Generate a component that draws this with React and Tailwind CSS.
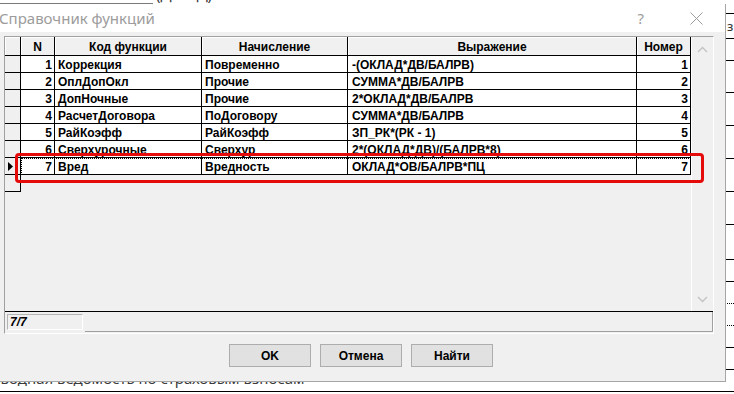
import React from 'react';

const rows = [
  [1, 'Коррекция', 'Повременно', '-(ОКЛАД*ДВ/БАЛРВ)', 1],
  [2, 'ОплДопОкл', 'Прочие', 'СУММА*ДВ/БАЛРВ', 2],
  [3, 'ДопНочные', 'Прочие', '2*ОКЛАД*ДВ/БАЛРВ', 3],
  [4, 'РасчетДоговора', 'ПоДоговору', 'СУММА*ДВ/БАЛРВ', 4],
  [5, 'РайКоэфф', 'РайКоэфф', 'ЗП_РК*(РК - 1)', 5],
  [6, 'Сверхурочные', 'Сверхур', '2*(ОКЛАД*ДВ)/(БАЛРВ*8)', 6],
  [7, 'Вред', 'Вредность', 'ОКЛАД*ОВ/БАЛРВ*ПЦ', 7],
];

// высоты строк листа за диалогом
const sheetRows = [
  { h: 'h-[10px]' },
  { h: 'h-[25px]', mark: true },
  { h: 'h-[22px]' },
  { h: 'h-[32px]' },
  { h: 'h-[33px]' },
  { h: 'h-[33px]' },
  { h: 'h-[33px]' },
  { h: 'h-[33px]' },
  { h: 'h-[35px]' },
  { h: 'h-[22px]' },
  { h: 'h-[22px]', dotted: true },
  { h: 'h-[22px]', dotted: true },
  { h: 'h-[22px]' },
  { h: 'h-[22px]' },
  { h: 'h-[22px]', last: true },
];

const cell = 'border-r border-b border-black h-full flex items-center pt-[1px] overflow-hidden whitespace-nowrap';

const HeaderCell = ({ w, children }) => (
  <div className={`${w} ${cell} justify-center bg-[#f0f0f0] shadow-[inset_1px_1px_0_#ffffff]`}>{children}</div>
);

const Chevron = ({ down }) => (
  <svg width="11" height="7" viewBox="0 0 11 7">
    <polyline
      points={down ? '1,1 5.5,5.5 10,1' : '1,6 5.5,1.5 10,6'}
      fill="none"
      stroke="#c2c2c2"
      strokeWidth="1.3"
    />
  </svg>
);

const Button = ({ children }) => (
  <button className="w-[82px] h-[23px] bg-[#e1e1e1] border border-[#adadad] text-[12px] font-bold text-black flex items-center justify-center">
    {children}
  </button>
);

export default function App() {
  return (
    <div className="relative w-[734px] h-[394px] overflow-hidden bg-white font-['Liberation_Sans',Arial,sans-serif]">
      {/* лист под диалогом */}
      <div className="h-[4px] flex overflow-hidden">
        <div className="w-[153px] h-[4px] border-b border-[#7a7a7a]" />
        <span className="ml-[3px] -mt-[13px] text-[15px] leading-none text-[#333] font-['Noto_Sans',sans-serif]">(ДФ БД)</span>
      </div>
      {sheetRows.map((r, i) => (
        <div
          key={i}
          className={`${r.h} w-full border-b border-black ${r.dotted ? 'border-dotted' : ''} flex ${r.last ? 'items-end' : 'items-center'}`}
        >
          {r.mark && <span className="ml-[727px] text-[13px] leading-none text-[#333] font-['Noto_Sans',sans-serif]">з</span>}
          {r.last && (
            <span className="-ml-[9px] pb-[5px] text-[15px] leading-none text-[#3a3a3a] font-['Noto_Sans',sans-serif] whitespace-nowrap">
              Сводная ведомость по страховым взносам
            </span>
          )}
        </div>
      ))}

      {/* окно диалога */}
      <div className="absolute left-0 top-[4px] w-[726px] h-[378px] flex flex-col bg-[#f0f0f0] border-r border-b border-[#a6a6a6]">
        <div className="h-[28px] bg-white flex items-center shrink-0">
          <span className="-ml-[1px] text-[15px] text-[#9c9c9c] font-['Noto_Sans',sans-serif] whitespace-nowrap">Справочник функций</span>
          <span className="ml-auto text-[15px] text-[#9c9c9c] font-['Noto_Sans',sans-serif]">?</span>
          <svg className="ml-[46px] mr-[22px]" width="13" height="13" viewBox="0 0 13 13">
            <path d="M0.5 0.5 L12.5 12.5 M12.5 0.5 L0.5 12.5" stroke="#9c9c9c" strokeWidth="1" />
          </svg>
        </div>

        <div className="flex-1 flex flex-col pt-[4px]">
          <div className="ml-[4px] w-[710px] h-[298px] border border-[#a0a0a0] border-r-white border-b-white flex flex-col">
            <div className="h-[274px] flex">
              <div className="w-[686px] flex flex-col text-[12px] font-bold text-black">
                <div className="h-[19px] flex">
                  <HeaderCell w="w-[16px]" />
                  <HeaderCell w="w-[34px]">N</HeaderCell>
                  <HeaderCell w="w-[147px]">Код функции</HeaderCell>
                  <HeaderCell w="w-[146px]">Начисление</HeaderCell>
                  <HeaderCell w="w-[289px]">Выражение</HeaderCell>
                  <HeaderCell w="w-[54px]">Номер</HeaderCell>
                </div>
                {rows.map((r) => (
                  <div key={r[0]} className="h-[17px] flex">
                    <div className={`w-[16px] ${cell} bg-[#f0f0f0] pl-[3px]`}>
                      {r[0] === 7 && (
                        <svg width="5" height="9" viewBox="0 0 5 9">
                          <polygon points="0,0 5,4.5 0,9" fill="#000" />
                        </svg>
                      )}
                    </div>
                    <div className="relative flex h-full">
                      <div className={`w-[34px] ${cell} justify-end pr-[2px] bg-white`}>{r[0]}</div>
                      <div className={`w-[147px] ${cell} pl-[3px] bg-white`}>{r[1]}</div>
                      <div className={`w-[146px] ${cell} pl-[3px] bg-white`}>{r[2]}</div>
                      <div className={`w-[289px] ${cell} pl-[4px] bg-white`}>{r[3]}</div>
                      <div className={`w-[54px] ${cell} justify-end pr-[2px] bg-white`}>{r[4]}</div>
                      {r[0] === 7 && (
                        <span className="absolute inset-0 border border-dotted border-black pointer-events-none" />
                      )}
                    </div>
                  </div>
                ))}
                <div className="h-[17px] w-[16px] border-r border-b border-black bg-[#f0f0f0]" />
              </div>
              <div className="w-[22px] h-full border-l border-white flex flex-col items-center justify-between pt-[9px] pb-[8px]">
                <Chevron />
                <Chevron down />
              </div>
            </div>
            <div className="h-[22px] border-t border-black flex items-start pt-[2px] pl-[2px] gap-[2px]">
              <div className="w-[76px] h-[16px] border border-[#b4b4b4] border-r-white border-b-white flex items-center pl-[2px] text-[12px] font-bold italic">
                7/7
              </div>
              <div className="flex-1 h-[20px] -mt-[2px] border-r border-b border-[#a0a0a0]" />
            </div>
          </div>

          <div className="mt-[10px] ml-[229px] flex gap-[9px]">
            <Button>OK</Button>
            <Button>Отмена</Button>
            <Button>Найти</Button>
          </div>
        </div>
      </div>

      {/* пометка красной рамкой */}
      <div className="absolute left-[15px] top-[153px] w-[689px] h-[30px] border-[3px] border-[#e60b0b] rounded-[4px] pointer-events-none" />
    </div>
  );
}
